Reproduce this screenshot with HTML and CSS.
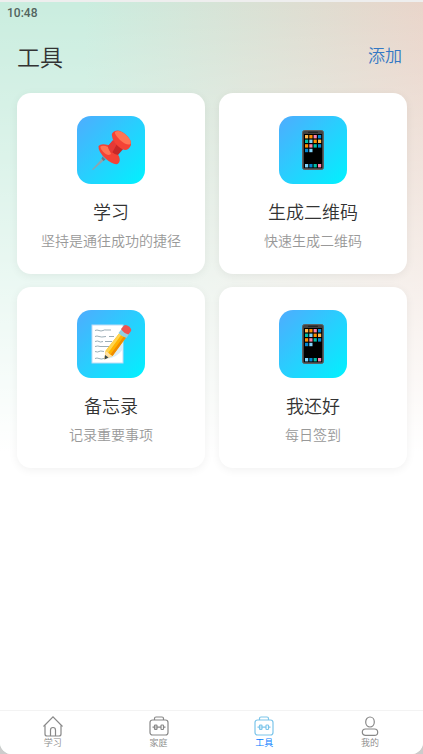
FILE: index.html
```
<!DOCTYPE html>
<html lang="zh-CN">
<head>
    <meta charset="UTF-8">
    <meta name="viewport" content="width=device-width, initial-scale=1.0">
    <title>工具</title>

    <link rel="stylesheet" href="styles.css">
</head>
<body>

    <!-- shared icon shapes -->
    <svg class="sprite" aria-hidden="true">
        <symbol id="phone" viewBox="0 0 40 40">
            <rect x="9.5" y="0.5" width="21" height="39" rx="2" fill="#424242" stroke="#5f5f5f"/>
            <rect x="11" y="4" width="18" height="34" fill="#000"/>
            <rect x="15" y="1.8" width="10" height="1" rx="0.5" fill="#1c1c1c"/>
            <g fill="#ffb74d">
                <rect x="12" y="5" width="3.2" height="3.4"/>
                <rect x="25" y="9.6" width="3.2" height="3.4"/>
            </g>
            <g fill="#ff8f00">
                <rect x="16.3" y="5" width="3.2" height="3.4"/>
                <rect x="20.6" y="9.6" width="3.2" height="3.4"/>
                <rect x="12" y="14.2" width="3.2" height="3.4"/>
            </g>
            <g fill="#ff80ab">
                <rect x="20.6" y="5" width="3.2" height="3.4"/>
                <rect x="16.3" y="14.2" width="3.2" height="3.4"/>
                <rect x="25" y="34" width="3.2" height="3.4"/>
            </g>
            <g fill="#0288d1">
                <rect x="25" y="5" width="3.2" height="3.4"/>
                <rect x="25" y="14.2" width="3.2" height="3.4"/>
                <rect x="12" y="18.8" width="3.2" height="3.4"/>
                <rect x="16.3" y="34" width="3.2" height="3.4"/>
            </g>
            <g fill="#00bfa5">
                <rect x="12" y="9.6" width="3.2" height="3.4"/>
                <rect x="20.6" y="14.2" width="3.2" height="3.4"/>
                <rect x="20.6" y="34" width="3.2" height="3.4"/>
            </g>
            <g fill="#81d4fa">
                <rect x="16.3" y="9.6" width="3.2" height="3.4"/>
                <rect x="16.3" y="18.8" width="3.2" height="3.4"/>
                <rect x="12" y="34" width="3.2" height="3.4"/>
            </g>
        </symbol>
        <symbol id="toolbox" viewBox="0 0 20 20">
            <g fill="none" stroke="currentColor" stroke-width="1.2">
                <rect x="1" y="4" width="18" height="15" rx="2.5"/>
                <path d="M5.5 4V2.5Q5.5 1 7 1H13Q14.5 1 14.5 2.5V4"/>
                <rect x="5.5" y="9" width="2.5" height="4.5" rx="0.8" fill="currentColor" fill-opacity="0.4"/>
                <rect x="12" y="9" width="2.5" height="4.5" rx="0.8"/>
                <path d="M3.5 11.2H5.5M8 11.2H12M14.5 11.2H16.5"/>
            </g>
        </symbol>
    </svg>

    <div class="app">
        <div class="status-bar">10:48</div>

        <header class="header">
            <h1>工具</h1>
            <button type="button" class="add-btn">添加</button>
        </header>

        <main class="tool-grid">
            <button type="button" class="card">
                <span class="card-icon">
                    <svg viewBox="0 0 40 40">
                        <path d="M12 27.5L14 29.5L2 40L1 39.5Z" fill="#90a4ae"/>
                        <path d="M11.5 26.5L14.5 29.5L12.5 31L10.5 28.5Z" fill="#607d8b"/>
                        <path d="M7.5 16Q10 13 17 15L28 26Q30 32 26.5 34Q22 35 15 29Q7 22 7.5 16Z" fill="#f44336"/>
                        <path d="M9.5 16.5Q12 15 17 17L20 24Q17 26 14 23.5Q9 19 9.5 16.5Z" fill="#ff7555"/>
                        <path d="M17 16L24 9L33 18L27 25Q20 24 17 16Z" fill="#c62828"/>
                        <path d="M17 16L22 10L26 14L21 23Q17 20 17 16Z" fill="#e53935"/>
                        <path d="M21 6Q20 3 24 1Q28 -1 34 4Q41 10 40 15Q38 20 34 20Q29 19 24 13Q21 9 21 6Z" fill="#f44336"/>
                        <path d="M24 2Q28 -1 34 4Q41 10 39.5 14Q36 16 29 10Q23 4 24 2Z" fill="#ff7555"/>
                    </svg>
                </span>
                <span class="card-title">学习</span>
                <span class="card-desc">坚持是通往成功的捷径</span>
            </button>

            <button type="button" class="card">
                <span class="card-icon"><svg><use href="#phone"/></svg></span>
                <span class="card-title">生成二维码</span>
                <span class="card-desc">快速生成二维码</span>
            </button>

            <button type="button" class="card">
                <span class="card-icon">
                    <svg viewBox="0 0 40 40">
                        <rect x="1" y="1" width="31" height="38" fill="#fff" stroke="#bddcf5"/>
                        <path d="M4 6.5q2-1 4 0t4 0t3-.5h5M4 12.5q2-1 4 0t7 0M18 12.5h5M4 17.5q3-1 4 0t4 0M14 17.5h7M4 22.5q3-1 5 0h10M4 27.5q3 1 4 0t5 0M4 34.5q2-1 4 0t5 0" fill="none" stroke="#90a4ae" stroke-width="0.9"/>
                        <path d="M15 35L32 13V25Q26 34 15 35Z" fill="#dcecf6"/>
                        <path d="M14.5 27L30 7L36.5 11.5L21.5 32L13.5 35Z" fill="#ffb300"/>
                        <path d="M14.5 27L30 7L32 8.5L17 29Z" fill="#ffd54f"/>
                        <path d="M19.5 30.5L34.5 10L36.5 11.5L21.5 32Z" fill="#f08c00"/>
                        <path d="M14.5 27L17 28.5L19 30.5L21.5 32L13.5 35.5Z" fill="#ffe0a3"/>
                        <path d="M14 31L17.5 33.5L13.5 35.5Z" fill="#37474f"/>
                        <path d="M27.5 9L31 4.5L38.5 9.5L35.5 14Q31 13 27.5 9Z" fill="#90cfe0"/>
                        <path d="M30 5L33 1.5Q35 0 38 2.5Q41 5 40 7L37.5 10.5Q33 9.5 30 5Z" fill="#ef5350"/>
                    </svg>
                </span>
                <span class="card-title">备忘录</span>
                <span class="card-desc">记录重要事项</span>
            </button>

            <button type="button" class="card">
                <span class="card-icon"><svg><use href="#phone"/></svg></span>
                <span class="card-title">我还好</span>
                <span class="card-desc">每日签到</span>
            </button>
        </main>

        <nav class="tab-bar">
            <a href="#study" class="tab">
                <svg viewBox="0 0 20 20">
                    <g fill="none" stroke="currentColor" stroke-width="1.2">
                        <path d="M0.5 10.5L10 0.8L19.5 10.5"/>
                        <path d="M2 9.5V18Q2 20 4 20H16Q18 20 18 18V9.5"/>
                        <path d="M7.5 20V14Q7.5 11.5 10 11.5T12.5 14V20"/>
                    </g>
                </svg>
                <span>学习</span>
            </a>
            <a href="#family" class="tab">
                <svg><use href="#toolbox"/></svg>
                <span>家庭</span>
            </a>
            <a href="#tools" class="tab active">
                <svg><use href="#toolbox"/></svg>
                <span>工具</span>
            </a>
            <a href="#mine" class="tab">
                <svg viewBox="0 0 20 20">
                    <g fill="none" stroke="currentColor" stroke-width="1.2">
                        <ellipse cx="10" cy="6" rx="4.3" ry="5"/>
                        <rect x="2.3" y="13" width="15.4" height="6.4" rx="3.2"/>
                    </g>
                </svg>
                <span>我的</span>
            </a>
        </nav>
    </div>

</body>
</html>
```

FILE: styles.css
```
body {
    margin: 0;
    background-color: #ccc;
    font-family: Roboto, "Noto Sans CJK SC", sans-serif;
    font-weight: 350;
}

.sprite {
    display: none;
}

.app {
    display: flex;
    flex-direction: column;
    min-height: 100vh;
    box-sizing: border-box;
    border-top: 2px solid #eee;
    border-radius: 0 0 12px 12px;
    background: linear-gradient(to bottom, transparent, #fff 450px),
                linear-gradient(to right, #caeddf 20%, #e9d5ca) #fff;
}

.status-bar {
    padding: 0 7px;
    font-size: 12px;
    font-weight: 500;
    line-height: 22px;
    color: #53645e;
}

.header {
    display: flex;
    justify-content: space-between;
    align-items: center;
    height: 64px;
    padding: 0 21px 0 17px;
}

.header h1 {
    margin: 0;
    font-size: 23px;
    font-weight: 350;
    color: #333;
}

.add-btn {
    padding: 0;
    border: none;
    background: none;
    font-family: inherit;
    font-size: 17px;
    font-weight: 350;
    line-height: 22px;
    color: #3478c4;
    cursor: pointer;
}

.tool-grid {
    display: grid;
    grid-template-columns: 1fr 1fr;
    gap: 13px 14px;
    padding: 5px 16px 20px 17px;
}

.card {
    display: flex;
    flex-direction: column;
    align-items: center;
    padding: 23px 8px;
    border: none;
    border-radius: 14px;
    background-color: #fff;
    box-shadow: 0 2px 10px rgba(0, 0, 0, 0.06);
    font-family: inherit;
    font-weight: 350;
    cursor: pointer;
}

.card-icon {
    display: flex;
    justify-content: center;
    align-items: center;
    width: 68px;
    height: 68px;
    margin-bottom: 17px;
    border-radius: 14px;
    background: linear-gradient(135deg, #4facfe, #00f2fe);
}

.card-icon svg {
    width: 40px;
    height: 40px;
    overflow: visible;
}

.card-title {
    margin-bottom: 6px;
    font-size: 18px;
    line-height: 24px;
    color: #333;
}

.card-desc {
    font-size: 14px;
    line-height: 20px;
    color: #999;
}

.tab-bar {
    display: flex;
    margin-top: auto;
    border-top: 1px solid #f3f3f3;
    border-radius: 0 0 12px 12px;
    background-color: #fff;
}

.tab {
    display: flex;
    flex: 1;
    flex-direction: column;
    align-items: center;
    padding: 5px 0 4px;
    font-size: 9px;
    line-height: 14px;
    color: #888;
    text-decoration: none;
}

.tab svg {
    width: 20px;
    height: 20px;
    overflow: visible;
}

.tab.active {
    color: #007aff;
}

.tab.active svg {
    color: #7cc5ea;
}
```
